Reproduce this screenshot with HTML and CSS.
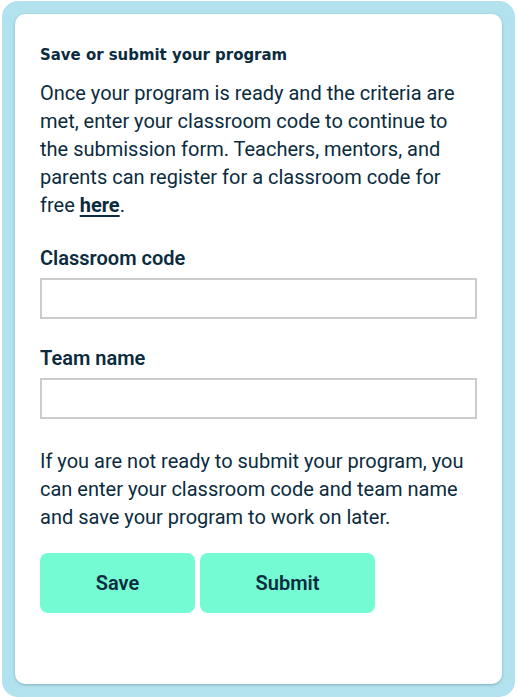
FILE: index.html
```html
<!DOCTYPE html>
<html>
<head>
<meta charset="utf-8">
<link rel="stylesheet" href="styles.css">
</head>
<body>
<div class="frame">
  <div class="card">
    <h2 class="title">Save or submit your program</h2>
    <p class="text">Once your program is ready and the criteria are met, enter your classroom code to continue to the submission form. Teachers, mentors, and parents can register for a classroom code for free <a href="#" class="link">here</a>.</p>
    <label class="label" for="code">Classroom code</label>
    <input class="field" id="code" type="text">
    <label class="label" for="team">Team name</label>
    <input class="field" id="team" type="text">
    <p class="text note">If you are not ready to submit your program, you can enter your classroom code and team name and save your program to work on later.</p>
    <div class="actions">
      <button class="btn btn-save">Save</button>
      <button class="btn btn-submit">Submit</button>
    </div>
  </div>
</div>
</body>
</html>
```
FILE: styles.css
```css
* { box-sizing: border-box; }
html, body { margin: 0; padding: 0; background: #ffffff; }
body { font-family: Roboto, "Liberation Sans", sans-serif; color: #0b2c3e; }

.frame {
  margin: 1px 3px 0 2px;
  padding: 13px;
  background: #b2e2ed;
  border-radius: 16px;
  height: 696px;
}

.card {
  background: #ffffff;
  border-radius: 10px;
  height: 670px;
  padding: 31px 25px 0 25px;
  display: flex;
  flex-direction: column;
  align-items: flex-start;
  box-shadow: 0 1px 3px rgba(60, 120, 140, 0.45);
}

.title {
  margin: 0;
  font-family: "DejaVu Sans Condensed", "DejaVu Sans", sans-serif;
  font-stretch: condensed;
  font-weight: 700;
  font-size: 16.6px;
  line-height: 20px;
  color: #0b2c3e;
}

.text {
  margin: 14px 0 0 0;
  font-size: 20px;
  line-height: 28px;
  width: 100%;
}

.link {
  color: #0b2c3e;
  font-weight: 700;
  text-decoration: underline;
  text-decoration-thickness: 2px;
  text-underline-offset: 3px;
}

.label {
  display: block;
  margin-top: 25px;
  font-size: 20px;
  line-height: 28px;
  font-weight: 600;
}

.field {
  margin-top: 6px;
  width: 437px;
  height: 41px;
  border: 2px solid #cccccc;
  border-radius: 0;
  background: #ffffff;
  font: inherit;
  padding: 0 10px;
}

.note { margin-top: 28px; }

.actions {
  margin-top: 22px;
  display: flex;
  gap: 5px;
}

.btn {
  height: 60px;
  border: none;
  border-radius: 8px;
  background: #74fbd3;
  color: #0b2c3e;
  font-family: Roboto, "Liberation Sans", sans-serif;
  font-size: 20px;
  font-weight: 600;
  cursor: pointer;
}
.btn-save { width: 155px; }
.btn-submit { width: 175px; }
```
